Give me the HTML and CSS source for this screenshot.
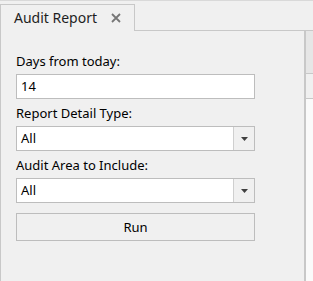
FILE: index.html
```html
<!DOCTYPE html>
<html>
<head>
<meta charset="utf-8">
<link rel="stylesheet" href="styles.css">
</head>
<body>
<div class="window">
  <div class="tabstrip">
    <div class="tab">
      <span class="tab-title">Audit Report</span>
      <svg class="tab-close" width="10" height="10" viewBox="0 0 10 10"><path d="M1 1 L9 9 M9 1 L1 9" stroke="#767676" stroke-width="1.8" fill="none"/></svg>
    </div>
    <div class="tab-rest"></div>
  </div>
  <div class="body">
    <div class="panel">
      <div class="field">
        <label class="label">Days from today:</label>
        <div class="input">14</div>
      </div>
      <div class="field">
        <label class="label">Report Detail Type:</label>
        <div class="combo">
          <div class="combo-text">All</div>
          <div class="combo-btn"><svg width="7" height="4" viewBox="0 0 7 4"><path d="M0 0 H7 L3.5 4 Z" fill="#404040"/></svg></div>
        </div>
      </div>
      <div class="field">
        <label class="label">Audit Area to Include:</label>
        <div class="combo">
          <div class="combo-text">All</div>
          <div class="combo-btn"><svg width="7" height="4" viewBox="0 0 7 4"><path d="M0 0 H7 L3.5 4 Z" fill="#404040"/></svg></div>
        </div>
      </div>
      <button class="run">Run</button>
    </div>
    <div class="side">
      <div class="side-head"></div>
      <div class="side-sub"></div>
      <div class="side-rest"></div>
    </div>
  </div>
</div>
</body>
</html>
```
FILE: styles.css
```css
html, body {
  margin: 0;
  padding: 0;
  background: #f0f0f0;
}
.window {
  width: 313px;
  height: 281px;
  display: flex;
  flex-direction: column;
  border-top: 1px solid #d9d9d9;
  box-sizing: border-box;
  font-family: "Noto Sans", "Open Sans", sans-serif;
  font-size: 12px;
  color: #000;
  overflow: hidden;
}
.tabstrip {
  display: flex;
  height: 30px;
  padding-top: 3px;
  box-sizing: border-box;
  flex: none;
}
.tab {
  width: 135px;
  box-sizing: border-box;
  border: 1px solid #c8c8c8;
  border-bottom: none;
  background: #f0f0f0;
  display: flex;
  align-items: center;
  padding-left: 13px;
  padding-bottom: 1px;
}
.tab-title {
  font-size: 14px;
  color: #1e1e1e;
}
.tab-close {
  margin-left: 14px;
}
.tab-rest {
  flex: 1;
  border-bottom: 1px solid #c8c8c8;
}
.body {
  flex: 1;
  display: flex;
}
.panel {
  width: 306px;
  box-sizing: border-box;
  border-left: 1px solid #c8c8c8;
  border-right: 2px solid #c8c8c8;
  padding: 20px 49px 0 15px;
  display: flex;
  flex-direction: column;
}
.field {
  display: flex;
  flex-direction: column;
  margin-bottom: 4px;
}
.label {
  font-size: 13px;
  height: 21px;
  line-height: 21px;
  margin-bottom: 2px;
  color: #000;
}
.input, .combo {
  height: 25px;
  box-sizing: border-box;
  border: 1px solid #bdbdbd;
  background: #fff;
  font-size: 13px;
  line-height: 23px;
  padding-left: 4px;
}
.combo {
  display: flex;
  padding-left: 0;
}
.combo-text {
  flex: 1;
  padding-left: 4px;
}
.combo-btn {
  width: 20px;
  border-left: 1px solid #cfcfcf;
  background: #f0f0f0;
  display: flex;
  align-items: center;
  justify-content: center;
}
.run {
  margin-top: 6px;
  height: 28px;
  border: 1px solid #bdbdbd;
  background: #f0f0f0;
  font-family: inherit;
  font-size: 13px;
  color: #000;
  padding: 0;
}
.side {
  flex: 1;
  display: flex;
  flex-direction: column;
}
.side-head {
  height: 42px;
  background: #e6e6e6;
  border-bottom: 1px solid #c8c8c8;
}
.side-sub {
  height: 24px;
  border-bottom: 1px solid #c8c8c8;
}
.side-rest {
  flex: 1;
  background: #fafafa;
}
```
